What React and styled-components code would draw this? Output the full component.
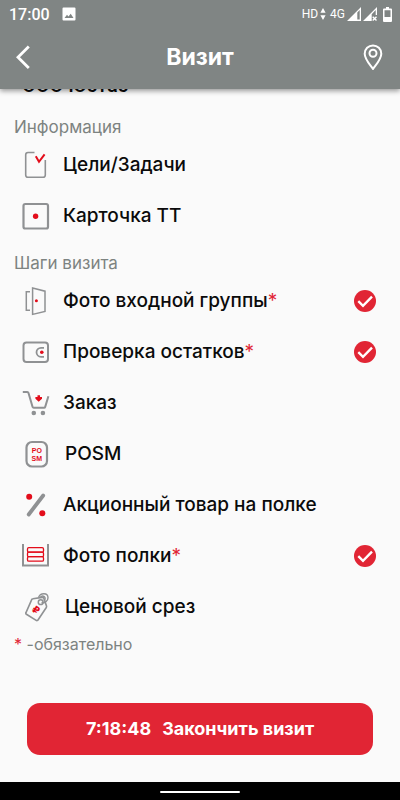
import React from 'react'
import styled, { createGlobalStyle } from 'styled-components'

const grey = '#8f9193'
const red = '#e30d1b'

const GoalsIcon = () => (
  <Icon>
    <path d='M12.5 3.5H6a2.3 2.3 0 0 0-2.3 2.3V26a2.3 2.3 0 0 0 2.3 2.3h15a2.3 2.3 0 0 0 2.3-2.3V11' strokeWidth='1.6' />
    <path d='M13.8 7.2L17 12.8L22.6 5.3' stroke={red} strokeWidth='2' />
  </Icon>
)

const CardIcon = () => (
  <Icon>
    <rect x='1.5' y='4' width='24.5' height='24.5' rx='1.8' strokeWidth='2.2' />
    <circle cx='13.6' cy='16.3' r='2.7' fill={red} stroke='none' />
  </Icon>
)

const DoorIcon = () => (
  <Icon>
    <path d='M10.6 3L23 6.2V26.4L10.6 29.4Z' strokeWidth='1.5' />
    <path d='M8 6.8H4.3V25.3H8' strokeWidth='1.5' />
    <circle cx='14.4' cy='15.7' r='1.5' fill={red} stroke='none' />
  </Icon>
)

const WalletIcon = () => (
  <Icon>
    <rect x='1.5' y='6.5' width='24.5' height='19.5' rx='3' strokeWidth='2' />
    <path d='M22 11.8H19a4.5 4.5 0 0 0 0 9H22' strokeWidth='1.8' />
    <circle cx='19.8' cy='16.3' r='1.8' fill={red} stroke='none' />
  </Icon>
)

const CartIcon = () => (
  <Icon>
    <path d='M.8 5H5.2a1.4 1.4 0 0 1 1.3 1L10.6 20a1.2 1.2 0 0 0 1.1.8H22a1.3 1.3 0 0 0 1.2-.9L26.4 9.3' strokeWidth='2' />
    <circle cx='11.8' cy='26' r='2.3' fill={grey} stroke='none' />
    <circle cx='20.9' cy='26' r='2.3' fill={grey} stroke='none' />
    <path d='M15.5 8.3H18V10H20V11.8L16.7 14.8L13.4 11.8V10H15.5Z' fill={red} stroke='none' />
  </Icon>
)

const PosmIcon = () => (
  <Icon>
    <rect x='4.5' y='4' width='20.5' height='24.5' rx='5.5' strokeWidth='2.2' />
    <text x='14.8' y='15' textAnchor='middle'>PO</text>
    <text x='14.8' y='23' textAnchor='middle'>SM</text>
  </Icon>
)

const PercentIcon = () => (
  <Icon>
    <path d='M6.7 25.5L21.2 6.5' strokeWidth='3.8' strokeLinecap='round' />
    <circle cx='7.2' cy='7.8' r='3' fill={red} stroke='none' />
    <circle cx='20.3' cy='24.3' r='3' fill={red} stroke='none' />
  </Icon>
)

const ShelfIcon = () => (
  <Icon>
    <path d='M1 4V25.5H26V4' strokeWidth='2' />
    <g stroke={red} strokeWidth='1.3'>
      <rect x='5.5' y='7.7' width='16' height='4.5' rx='1.3' />
      <rect x='5.5' y='12.2' width='16' height='4.5' rx='1.3' />
      <rect x='5.5' y='16.7' width='16' height='4.5' rx='1.3' />
    </g>
  </Icon>
)

const PriceIcon = () => (
  <Icon>
    <path d='M11 7.8L20.3 6.4a1.5 1.5 0 0 1 1.6 1L24.5 15a2 2 0 0 1-.2 1.5L16 29a1.3 1.3 0 0 1-1.8.4L4.4 23.3a1.3 1.3 0 0 1-.4-1.8L9.7 8.6Q10.1 7.9 11 7.8Z' strokeWidth='1.6' />
    <circle cx='18.7' cy='11.2' r='2.4' strokeWidth='1.5' />
    <path d='M16.5 6.5C18.3 1.4 26 1.5 26 6.7C26 10 22.8 12.4 19.5 11.5M18.2 6.4C20.8 3.2 25 6.4 22.2 9.7' strokeWidth='1.4' />
    <text x='14' y='22.5' textAnchor='middle' className='ruble' transform='rotate(32 14 19)'>₽</text>
  </Icon>
)

const info = [
  { title: 'Цели/Задачи', icon: GoalsIcon },
  { title: 'Карточка ТТ', icon: CardIcon },
]

const steps = [
  { title: 'Фото входной группы', icon: DoorIcon, required: true, done: true },
  { title: 'Проверка остатков', icon: WalletIcon, required: true, done: true },
  { title: 'Заказ', icon: CartIcon },
  { title: 'POSM', icon: PosmIcon, wide: true },
  { title: 'Акционный товар на полке', icon: PercentIcon },
  { title: 'Фото полки', icon: ShelfIcon, required: true, done: true },
  { title: 'Ценовой срез', icon: PriceIcon, wide: true },
]

const Item = ({ title, icon: ItemIcon, required, done, wide }) => (
  <li>
    <Row type='button' $wide={wide}>
      <ItemIcon />
      <span>
        {title}
        {required && <Star>*</Star>}
      </span>
      {done && (
        <Done viewBox='0 0 22 22' role='img' aria-label='Выполнено'>
          <circle cx='11' cy='11' r='11' fill='#e12534' />
          <path d='M4.3 11.2L9 15.8L18 6.7' fill='none' stroke='#fff' strokeWidth='2.4' />
        </Done>
      )}
    </Row>
  </li>
)

const App = () => {
  return (
    <Page>
      <GlobalStyle />
      <Header>
        <StatusBar>
          <time>17:00</time>
          <svg width='14' height='14' viewBox='0 0 14 14'>
            <path fillRule='evenodd' d='M1.5.5h11a1 1 0 0 1 1 1v11a1 1 0 0 1-1 1h-11a1 1 0 0 1-1-1v-11a1 1 0 0 1 1-1ZM2.5 11h9L8.7 6.8 6.5 9.5 5 7.8Z' fill='#fff' />
          </svg>
          <Signals>
            <span>HD</span>
            <svg width='6' height='12' viewBox='0 0 6 12'>
              <path d='M3 0L5.6 4.8H.4ZM3 12L.4 7.2H5.6Z' fill='#fff' />
            </svg>
            <Network>4G</Network>
            <svg width='14' height='14' viewBox='0 0 14 14'>
              <path fillRule='evenodd' d='M14 0V14H0ZM10.3 5.5V12.5H12.7V3Z' fill='#fff' />
            </svg>
            <svg width='14' height='14' viewBox='0 0 14 14'>
              <path d='M14 0V8H12.7V3L8.7 7.2V14H0Z' fill='#fff' />
              <path d='M9.7 9.7L13.5 13.5M13.5 9.7L9.7 13.5' stroke='#fff' strokeWidth='1.4' />
            </svg>
            <Battery width='9' height='15' viewBox='0 0 9 15'>
              <path fillRule='evenodd' d='M3 0H6V1.5H8a1 1 0 0 1 1 1V14a1 1 0 0 1-1 1H1a1 1 0 0 1-1-1V2.5a1 1 0 0 1 1-1H3ZM1.5 3.2V10H7.5V3.2Z' fill='#fff' />
            </Battery>
          </Signals>
        </StatusBar>
        <AppBar>
          <IconButton type='button' aria-label='Назад'>
            <svg width='16' height='24' viewBox='0 0 16 24'>
              <path d='M13.8 1.5L3 12.2L13.8 23' fill='none' stroke='#fff' strokeWidth='2.8' />
            </svg>
          </IconButton>
          <h1>Визит</h1>
          <IconButton type='button' aria-label='На карте'>
            <svg width='20' height='27' viewBox='0 0 20 27'>
              <path d='M10 2.4a8.3 8.3 0 0 0-8.3 8.3C1.7 16 6.5 21 10 26C13.5 21 18.3 16 18.3 10.7A8.3 8.3 0 0 0 10 2.4Z' fill='none' stroke='#fff' strokeWidth='2' />
              <circle cx='10' cy='10.3' r='3.5' fill='none' stroke='#fff' strokeWidth='2' />
            </svg>
          </IconButton>
        </AppBar>
      </Header>
      <Main>
        <Client>ООО Юстас</Client>
        <Label>Информация</Label>
        <List>
          {info.map((item) => (
            <Item key={item.title} {...item} />
          ))}
        </List>
        <Label>Шаги визита</Label>
        <List>
          {steps.map((item) => (
            <Item key={item.title} {...item} />
          ))}
        </List>
        <Note>
          <Star>*</Star> -обязательно
        </Note>
        <Finish type='button'>
          <span>7:18:48</span>
          <span>Закончить визит</span>
        </Finish>
      </Main>
      <NavBar />
    </Page>
  )
}

const GlobalStyle = createGlobalStyle`
  * {
    box-sizing: border-box;
  }

  body {
    margin: 0;
    background: #fafafa;
    color: #0b0b0b;
    font-family: Inter, 'Open Sans', sans-serif;
  }

  button {
    border: 0;
    font-family: inherit;
    cursor: pointer;
  }
`

const Page = styled.div`
  display: flex;
  flex-direction: column;
  min-height: 100vh;
`

const Header = styled.header`
  position: sticky;
  top: 0;
  z-index: 1;
  background: #808584;
  color: #fff;
  box-shadow: 0 2px 5px rgba(0, 0, 0, .4);
`

const StatusBar = styled.div`
  display: flex;
  align-items: center;
  gap: 12px;
  height: 28px;
  padding: 0 8px 0 9px;
  font-family: Roboto, sans-serif;

  time {
    font-size: 16px;
    font-weight: 500;
  }
`

const Signals = styled.div`
  display: flex;
  align-items: center;
  gap: 2px;
  margin-left: auto;
  font-size: 12px;
`

const Network = styled.span`
  margin-left: 2px;
`

const Battery = styled.svg`
  margin-left: 4px;
`

const AppBar = styled.div`
  display: flex;
  align-items: center;
  justify-content: space-between;
  height: 61px;
  padding: 0 12px 4px;

  h1 {
    margin: 0;
    font-size: 23px;
    line-height: 28px;
    font-weight: 700;
  }
`

const IconButton = styled.button`
  display: flex;
  align-items: center;
  justify-content: center;
  width: 30px;
  height: 40px;
  padding: 0;
  background: none;

  &:first-child {
    justify-content: flex-start;
    padding-left: 3px;
  }
`

const Main = styled.main`
  display: flex;
  flex: 1;
  flex-direction: column;
`

/* scrolled half under the header */
const Client = styled.div`
  margin-top: -16px;
  padding: 0 22px 3px;
  font-family: Roboto, sans-serif;
  font-size: 20px;
  line-height: 24px;
  font-weight: 500;
`

const Label = styled.h2`
  margin: 0;
  padding: 15px 14px 0;
  color: #7d8381;
  font-size: 17px;
  line-height: 24px;
  font-weight: 400;

  ul + & {
    padding-top: 10px;
  }
`

const List = styled.ul`
  margin: 0;
  padding: 0;
  list-style: none;
`

const Row = styled.button`
  display: flex;
  align-items: center;
  gap: ${({ $wide }) => ($wide ? 15 : 13)}px;
  width: 100%;
  height: 51px;
  padding: 0 24px 0 22px;
  background: none;
  color: inherit;
  font-size: 19px;
  line-height: 24px;
  font-weight: 500;
  text-align: left;
`

const Icon = styled.svg.attrs({ viewBox: '0 0 28 32', 'aria-hidden': true })`
  flex: none;
  width: 28px;
  height: 32px;
  fill: none;
  stroke: ${grey};

  text {
    fill: ${red};
    stroke: none;
    font-family: 'Liberation Sans', sans-serif;
    font-size: 7px;
    font-weight: 700;
  }

  .ruble {
    font-family: 'DejaVu Sans', sans-serif;
    font-size: 10px;
  }
`

const Done = styled.svg`
  flex: none;
  width: 22px;
  height: 22px;
  margin-left: auto;
`

const Star = styled.span`
  color: #e12534;
  font-weight: 400;
`

const Note = styled.p`
  margin: 0;
  padding: 0 14px;
  color: #7d8381;
  font-size: 16px;
  line-height: 24px;
`

const Finish = styled.button`
  display: flex;
  align-items: center;
  justify-content: center;
  gap: 11px;
  height: 52px;
  margin: auto 27px 27px;
  border-radius: 13px;
  background: #e12534;
  color: #fff;
  font-size: 18px;
  line-height: 24px;
  font-weight: 700;
`

const NavBar = styled.footer`
  display: grid;
  place-items: center;
  height: 18px;
  background: #000;

  &::before {
    content: '';
    width: 80px;
    height: 2px;
    margin-top: 2px;
    border-radius: 1px;
    background: #fff;
  }
`

export default App
